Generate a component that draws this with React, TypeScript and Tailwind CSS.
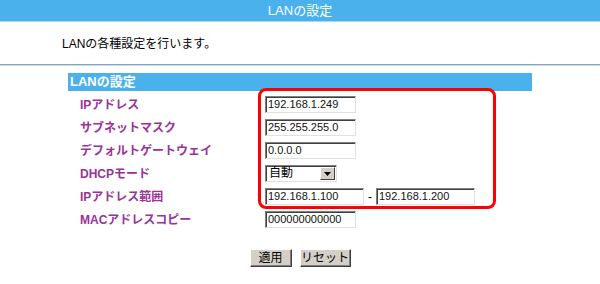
const FONT = '"Liberation Sans", "Noto Sans CJK JP", sans-serif';

const ROWS: { label: string; kind: 'text' | 'select' | 'range'; value?: string; from?: string; to?: string }[] = [
  { label: 'IPアドレス', kind: 'text', value: '192.168.1.249' },
  { label: 'サブネットマスク', kind: 'text', value: '255.255.255.0' },
  { label: 'デフォルトゲートウェイ', kind: 'text', value: '0.0.0.0' },
  { label: 'DHCPモード', kind: 'select', value: '自動' },
  { label: 'IPアドレス範囲', kind: 'range', from: '192.168.1.100', to: '192.168.1.200' },
  { label: 'MACアドレスコピー', kind: 'text', value: '000000000000' },
];

function Field({ value, width }: { value: string; width: string }) {
  return (
    <div
      className={`${width} h-[17px] bg-white border border-t-[#808080] border-l-[#808080] border-b-[#e0e0e0] border-r-[#e0e0e0] shadow-[inset_1px_1px_0_#404040] pl-[2px] text-[11px] leading-[15px] text-[#111]`}
    >
      {value}
    </div>
  );
}

function Select({ value }: { value: string }) {
  return (
    <div className="w-[72px] h-[17px] bg-white border border-t-[#808080] border-l-[#808080] border-b-[#e0e0e0] border-r-[#e0e0e0] shadow-[inset_1px_1px_0_#404040] flex items-center">
      <span className="flex-1 pl-[3px] text-[12px] leading-[15px] text-black">{value}</span>
      <span className="w-[15px] h-[13px] mr-[1px] bg-[#d4d0c8] border border-t-white border-l-white border-b-[#404040] border-r-[#404040] flex items-center justify-center">
        <svg width="7" height="4" viewBox="0 0 7 4">
          <path d="M0 0h7L3.5 4z" fill="#000" />
        </svg>
      </span>
    </div>
  );
}

function Button({ label, width }: { label: string; width: string }) {
  return (
    <button
      className={`${width} h-[18px] px-0 bg-[#d4d0c8] border border-t-white border-l-white border-b-[#404040] border-r-[#404040] shadow-[inset_-1px_-1px_0_#808080] text-[12px] leading-[14px] text-black`}
    >
      {label}
    </button>
  );
}

export default function App() {
  return (
    <div className="relative w-[600px] h-[284px] bg-white overflow-hidden" style={{ fontFamily: FONT }}>
      {/* title bar */}
      <div className="h-[22px] bg-[#4ab1ed] border-b border-[#a9d8f5] text-center text-white text-[13px] leading-[21px]">
        LANの設定
      </div>

      <p className="mt-[14px] pl-[62px] text-[12px] leading-[16px] text-black">LANの各種設定を行います。</p>

      <div className="mt-[12px] h-[2px] border-t border-[#8aa6bd] border-b border-b-[#c9d9e6]" />

      {/* settings section */}
      <div className="mx-[68px] mt-[7px]">
        <div className="h-[18px] bg-[#4ab1ed] pl-[2px] text-white font-bold text-[13px] leading-[18px]">LANの設定</div>
        <div className="mt-[2px]">
          {ROWS.map(r => (
            <div key={r.label} className="h-[23px] flex items-center">
              <span className="w-[197px] pl-[12px] text-[12px] font-bold text-[#993399]">{r.label}</span>
              {r.kind === 'text' && <Field value={r.value!} width="w-[91px]" />}
              {r.kind === 'select' && <Select value={r.value!} />}
              {r.kind === 'range' && (
                <div className="flex items-center">
                  <Field value={r.from!} width="w-[99px]" />
                  <span className="w-[12px] text-center text-[12px] text-black">-</span>
                  <Field value={r.to!} width="w-[99px]" />
                </div>
              )}
            </div>
          ))}
        </div>
      </div>

      {/* buttons */}
      <div className="mt-[18px] flex justify-center gap-[8px]">
        <Button label="適用" width="w-[42px]" />
        <Button label="リセット" width="w-[51px]" />
      </div>

      {/* highlight annotation */}
      <div className="absolute left-[258px] top-[88px] w-[238px] h-[121px] border-[3px] border-[#ff0000] rounded-[8px]" />
    </div>
  );
}
